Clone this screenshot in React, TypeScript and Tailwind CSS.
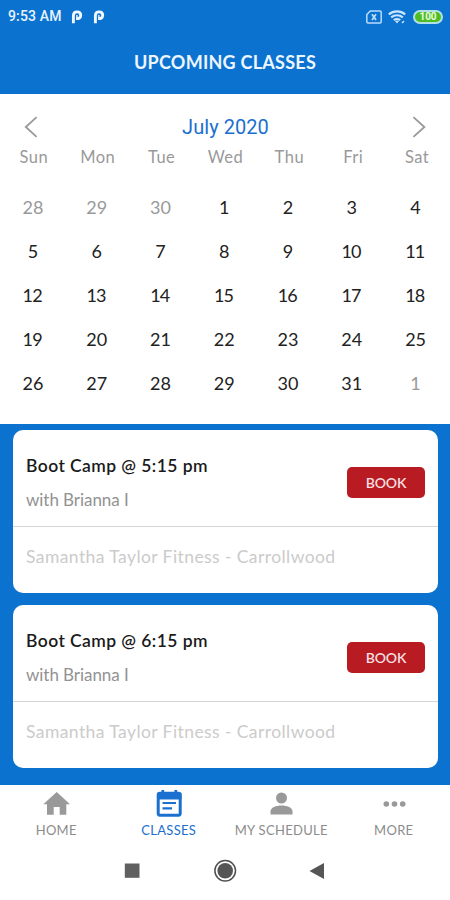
import React from "react";

const weekdays = ["Sun", "Mon", "Tue", "Wed", "Thu", "Fri", "Sat"];
const weeks = [
  [28, 29, 30, 1, 2, 3, 4],
  [5, 6, 7, 8, 9, 10, 11],
  [12, 13, 14, 15, 16, 17, 18],
  [19, 20, 21, 22, 23, 24, 25],
  [26, 27, 28, 29, 30, 31, 1],
];
const isOutside = (week: number, day: number) =>
  (week === 0 && day > 20) || (week === 4 && day < 20);

function ParkingMark() {
  return (
    <svg className="h-[14px] w-[12px]" viewBox="0 0 12 14" fill="none" stroke="#f2f8ff">
      <path d="M2.4 13.2V5.6C2.4 2.9 4 1.9 6.1 1.9C8.3 1.9 9.7 3.2 9.7 5.3C9.7 7.8 7.8 8.9 5.2 8.5" strokeWidth="2.9" />
      <path d="M5.9 5v3.4" strokeWidth="1.4" />
    </svg>
  );
}

function StatusBar() {
  return (
    <div className="flex h-8 items-center justify-between pt-px pr-[7px] pl-2 font-['Roboto',sans-serif] text-[#e8f3ff]">
      <div className="flex items-center">
        <span className="w-[62px] text-[14px] font-medium tracking-[0.15px] whitespace-nowrap">9:53 AM</span>
        <span className="flex gap-[10px] pl-px">
          <ParkingMark />
          <ParkingMark />
        </span>
      </div>
      <div className="flex items-center">
        <svg className="h-[14px] w-4" viewBox="0 0 16 14" fill="none" stroke="#b9dcff" strokeWidth="1.5">
          <path d="M4.3 1H14a1.2 1.2 0 0 1 1.2 1.2v9.6A1.2 1.2 0 0 1 14 13H2a1.2 1.2 0 0 1-1.2-1.2V4.5z" />
          <path d="M6 4.2l4 5.8M10 4.2L6 10" strokeWidth="1.8" />
        </svg>
        <svg className="ml-[6px] h-[14px] w-[18px]" viewBox="0 0 18 14" fill="none" stroke="#c9e5ff" strokeWidth="2.1">
          <path d="M.8 4.4c4.8-4 11.6-4 16.4 0M3.2 7.4c3.4-2.9 8.2-2.9 11.6 0M5.8 10.2c2-1.5 4.4-1.5 6.4 0" />
          <path d="M7 11l2 2.6 2-2.6c-1.2-.8-2.8-.8-4 0z" fill="#c9e5ff" stroke="none" />
          <path d="M14 13l2-2" strokeWidth="1.4" />
        </svg>
        <span className="ml-[7px] flex h-[14px] w-[30px] items-center justify-center rounded-full border-2 border-[#b3dfe6] bg-[#50bd22] text-[10px] leading-none font-bold text-[#e8ffe0]">
          100
        </span>
      </div>
    </div>
  );
}

function Calendar() {
  return (
    <section className="h-[330px] bg-white">
      <div className="flex h-[50px] items-center justify-between px-6 pt-[15px]">
        <svg className="h-[22px] w-[14px]" viewBox="0 0 14 22" fill="none" stroke="#999" strokeWidth="1.8">
          <path d="M12.6 1.2L1.8 11l10.8 9.8" />
        </svg>
        <h2 className="pt-px pl-px font-['Roboto',sans-serif] text-[20px] leading-6 tracking-[0.05px] text-[#1b70cf]">July 2020</h2>
        <svg className="h-[22px] w-[14px]" viewBox="0 0 14 22" fill="none" stroke="#999" strokeWidth="1.8">
          <path d="M1.4 1.2L12.4 11L1.4 20.8" />
        </svg>
      </div>
      <div className="ml-[2px] grid w-[447px] grid-cols-7 text-center text-[16.5px] leading-[27px] tracking-[0.5px] text-[#999]">
        {weekdays.map((d) => (
          <span key={d}>{d}</span>
        ))}
      </div>
      <div className="mt-[15px] ml-[1px] grid w-[446.5px] grid-cols-7 text-center text-[18px]">
        {weeks.map((row, w) =>
          row.map((d) => (
            <span
              key={`${w}-${d}`}
              className={`flex h-[43.8px] items-center justify-center ${d > 9 && d < 20 ? "pr-[1.5px] tracking-[-0.9px]" : ""} ${isOutside(w, d) ? "text-[#999]" : "text-[#222]"}`}
            >
              {d}
            </span>
          )),
        )}
      </div>
    </section>
  );
}

function ClassCard({ time }: { time: string }) {
  return (
    <article className="h-[163.5px] rounded-[10px] bg-white">
      <div className="flex h-[97px] items-center justify-between border-b-[1.5px] border-[#d5d5d5] px-[13px]">
        <div className="pt-[11px]">
          <h3 className="text-[17.5px] leading-[34px] font-semibold tracking-[0.43px] text-[#1a1a1a]">Boot Camp @ {time}</h3>
          <p className="text-[17px] leading-[34px] tracking-[-0.05px] text-[#929292]">with Brianna I</p>
        </div>
        <button className="mt-[10px] h-[31px] w-[78px] rounded-[5px] bg-[#b81c22] pb-px text-[14px] font-semibold tracking-[-0.1px] text-[#f7dfe0]">
          BOOK
        </button>
      </div>
      <p className="pl-[13px] text-[17.5px] leading-[60px] tracking-[0.42px] text-[#cbcbcb]">
        Samantha Taylor Fitness - Carrollwood
      </p>
    </article>
  );
}

function HomeIcon() {
  return (
    <svg className="h-7 w-7" viewBox="0 0 28 28" fill="#999">
      <path d="M14.7 2L28 14.2H24.3V24.8h-6.6V17h-6v7.8H5V14.2H1.3z" />
    </svg>
  );
}

function ClassesIcon() {
  return (
    <svg className="h-7 w-7" viewBox="0 0 28 28" fill="none" stroke="#1b70cf">
      <rect x="3.2" y="3.2" width="22" height="22" rx="1.6" strokeWidth="3" />
      <path d="M2 3h24.4v6.5H2z" fill="#1b70cf" stroke="none" />
      <path d="M7.8 0v5M20.8 0v5" strokeWidth="2.8" />
      <path d="M7.5 13h13.5M7.5 18.3h9.5" strokeWidth="2.2" />
    </svg>
  );
}

function PersonIcon() {
  return (
    <svg className="h-7 w-7" viewBox="0 0 28 28" fill="#999">
      <circle cx="14.5" cy="8" r="5.5" />
      <path d="M3.5 24.5v-3c0-8 22-8 22 0v3z" />
    </svg>
  );
}

function MoreIcon() {
  return (
    <svg className="h-7 w-7" viewBox="0 0 28 28" fill="#999">
      <circle cx="6.3" cy="14" r="2.8" />
      <circle cx="14.5" cy="14" r="2.8" />
      <circle cx="22.7" cy="14" r="2.8" />
    </svg>
  );
}

const tabs = [
  { label: "HOME", icon: <HomeIcon />, active: false },
  { label: "CLASSES", icon: <ClassesIcon />, active: true },
  { label: "MY SCHEDULE", icon: <PersonIcon />, active: false },
  { label: "MORE", icon: <MoreIcon />, active: false },
];

export default function App() {
  return (
    <div className="flex h-[900px] w-[450px] flex-col overflow-hidden bg-[#0b73cf] font-['Lato',sans-serif]">
      <header className="h-[94px]">
        <StatusBar />
        <h1 className="text-center text-[18px] leading-[61px] font-bold tracking-[0.25px] text-[#edf6ff]">UPCOMING CLASSES</h1>
      </header>
      <Calendar />
      <main className="flex h-[361px] flex-col gap-[11.5px] pt-[5.5px] pr-3 pl-[13px]">
        <ClassCard time="5:15 pm" />
        <ClassCard time="6:15 pm" />
      </main>
      <nav className="grid h-[55px] grid-cols-4 bg-white pt-[5px]">
        {tabs.map((t) => (
          <div
            key={t.label}
            className={`flex flex-col items-center text-[13px] leading-[24px] tracking-[0.3px] ${t.active ? "text-[#1b70cf]" : "text-[#8c8c8c]"}`}
          >
            {t.icon}
            <span>{t.label}</span>
          </div>
        ))}
      </nav>
      <footer className="flex h-[60px] items-start justify-center bg-white pt-[19px]">
        <svg className="h-6 w-[210px]" viewBox="0 0 210 24">
          <path d="M4.8 4.5h14.7v14.3H4.8z" fill="#606060" />
          <circle cx="105.2" cy="11.8" r="10.3" fill="none" stroke="#505050" strokeWidth="1.5" />
          <circle cx="105.2" cy="11.8" r="7.8" fill="#555" />
          <path d="M204 4v16L189.5 12z" fill="#555" />
        </svg>
      </footer>
    </div>
  );
}
